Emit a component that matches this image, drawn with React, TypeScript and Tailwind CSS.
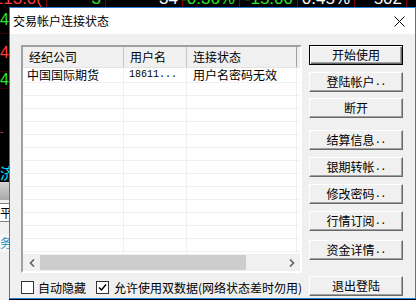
import React from "react";

const tickers = [
  { w: "w-[47px]", text: "4213.0(", color: "text-[#ff3c3c]" },
  { w: "w-[59px]", text: "3", color: "text-[#29e629]" },
  { w: "w-[77px]", text: "34", color: "text-white" },
  { w: "w-[57px]", text: "-0.36%", color: "text-[#29e629]" },
  { w: "w-[58px]", text: "-15.00", color: "text-[#29e629]" },
  { w: "w-[57px]", text: "0.45%", color: "text-white" },
  { w: "w-[52px]", text: "502", color: "text-white" },
];

const buttons = [
  { label: "开始使用", dots: false, mt: "mt-0", primary: true },
  { label: "登陆帐户", dots: true, mt: "mt-[7px]" },
  { label: "断开", dots: false, mt: "mt-[6px]" },
  { label: "结算信息", dots: true, mt: "mt-[12px]" },
  { label: "银期转帐", dots: true, mt: "mt-[7px]" },
  { label: "修改密码", dots: true, mt: "mt-[7px]" },
  { label: "行情订阅", dots: true, mt: "mt-[7px]" },
  { label: "资金详情", dots: true, mt: "mt-[9px]" },
  { label: "退出登陆", dots: false, mt: "mt-[16px]" },
];

function Dots() {
  return <span className="font-['Liberation_Mono',monospace] text-[11px] tracking-[-1px]">..</span>;
}

function WinButton({ label, dots, mt, primary }: { label: string; dots: boolean; mt: string; primary?: boolean }) {
  return (
    <div
      className={`${mt} h-[20px] w-[94px] flex items-center justify-center bg-[#f0f0f0] text-[12px] text-black leading-none ${
        primary
          ? "border border-black shadow-[inset_1px_1px_0_#ffffff,inset_-1px_-1px_0_#696969,inset_-2px_-2px_0_#a0a0a0]"
          : "border border-t-white border-l-white border-r-[#696969] border-b-[#696969] shadow-[inset_-1px_-1px_0_#a0a0a0]"
      }`}
    >
      <span>{label}</span>
      {dots && <Dots />}
    </div>
  );
}

function Row() {
  return (
    <div className="flex shrink-0 h-[13px] border-b border-[#f0f0f0]">
      <div className="w-[101px] border-r border-[#f0f0f0]" />
      <div className="w-[63px] border-r border-[#f0f0f0]" />
      <div className="w-[110px] border-r border-[#f0f0f0]" />
      <div className="flex-1" />
    </div>
  );
}

export default function App() {
  return (
    <div className="relative w-[416px] h-[300px] overflow-hidden bg-black font-['Noto_Sans_CJK_SC','Noto_Sans',sans-serif]">
      {/* market board behind the dialog */}
      <div className="flex h-[7px] overflow-hidden">
        {tickers.map((t, i) => (
          <div
            key={i}
            className={`${t.w} shrink-0 border-r border-[#7a0000] flex justify-end pr-[4px] font-['Liberation_Sans',sans-serif] text-[17px] leading-[16px] -mt-[9px] ${t.color}`}
          >
            {t.text}
          </div>
        ))}
      </div>
      <div className="flex flex-col w-[9px] h-[293px] overflow-hidden font-['Liberation_Sans',sans-serif] text-[16px] leading-none">
        <div className="h-[27px] flex items-center text-[#29e629] border-b border-[#3a0000]">4213</div>
        <div className="h-[38px] flex items-center text-[#ff3c3c] border-b border-[#3a0000]">4213</div>
        <div className="h-[17px] flex items-center text-[#29e629] border-b border-[#3a0000]">4213</div>
        <div className="h-[30px]" />
        <div className="h-[26px] flex items-center text-[#ff3c3c] text-[10px]">-</div>
        <div className="h-[17px]" />
        <div className="h-[20px] flex items-center text-[#00e5ff] font-['Noto_Sans_CJK_SC',sans-serif] text-[15px]">济</div>
        <div className="h-[18px] bg-gradient-to-b from-[#d4d4d4] to-[#a8a8a8]" />
        <div className="h-[3px] bg-[#f0f0f0]" />
        <div className="h-[19px] bg-white border-y border-[#808080] flex items-center text-black font-['Noto_Sans_CJK_SC',sans-serif] text-[12px]">平</div>
        <div className="h-[12px] bg-[#f0f0f0]" />
        <div className="h-[18px] bg-[#f7f7f7] flex items-center text-[#1e90c8] font-['Noto_Sans_CJK_SC',sans-serif] text-[12px]">务</div>
        <div className="flex-1 bg-[#f0f0f0]" />
      </div>

      {/* dialog window */}
      <div className="absolute left-[9px] top-[7px] w-[407px] h-[292px] border border-[#2a7fd4] flex flex-col">
        <div className="h-[26px] shrink-0 bg-white flex items-center justify-between pl-[3px] pr-[10px]">
          <span className="text-[12px] text-black leading-none">交易帐户连接状态</span>
          <svg width="11" height="11" viewBox="0 0 11 11">
            <path d="M0.5 0.5 L10.5 10.5 M10.5 0.5 L0.5 10.5" stroke="#000" strokeWidth="1" />
          </svg>
        </div>

        <div className="flex-1 bg-[#f0f0f0] flex pl-[11px] pt-[11px]">
          <div className="w-[281px] shrink-0 flex flex-col">
            {/* list view */}
            <div className="h-[228px] shrink-0 flex flex-col bg-white border-2 border-t-[#a0a0a0] border-l-[#a0a0a0] border-r-white border-b-white text-[12px] text-black leading-none">
              <div className="h-[21px] shrink-0 flex bg-[#f0f0f0] border-b border-[#e3e3e3]">
                <div className="w-[101px] border-r border-[#c8c8c8] flex items-center pl-[6px]">经纪公司</div>
                <div className="w-[63px] border-r border-[#c8c8c8] flex items-center pl-[6px]">用户名</div>
                <div className="w-[110px] border-r border-[#a0a0a0] flex items-center pl-[6px]">连接状态</div>
                <div className="flex-1" />
              </div>
              <div className="flex-1 flex flex-col overflow-hidden">
                <div className="flex shrink-0 h-[15px] border-b border-[#f0f0f0]">
                  <div className="w-[101px] border-r border-[#f0f0f0] flex items-center pl-[4px]">中国国际期货</div>
                  <div className="w-[63px] border-r border-[#f0f0f0] flex items-center pl-[5px] font-['Liberation_Mono',monospace] text-[10px]">18611...</div>
                  <div className="w-[110px] border-r border-[#f0f0f0] flex items-center pl-[6px]">用户名密码无效</div>
                  <div className="flex-1" />
                </div>
                {Array.from({ length: 14 }).map((_, i) => (
                  <Row key={i} />
                ))}
              </div>
              {/* horizontal scrollbar */}
              <div className="h-[17px] shrink-0 flex bg-[#f0f0f0]">
                <div className="w-[17px] flex items-center justify-center">
                  <svg width="6" height="8" viewBox="0 0 6 8">
                    <path d="M5 0.5 L1.5 4 L5 7.5" stroke="#606060" strokeWidth="1.6" fill="none" />
                  </svg>
                </div>
                <div className="w-[206px] my-[1px] bg-[#cdcdcd]" />
                <div className="flex-1" />
                <div className="w-[17px] flex items-center justify-center">
                  <svg width="6" height="8" viewBox="0 0 6 8">
                    <path d="M1 0.5 L4.5 4 L1 7.5" stroke="#606060" strokeWidth="1.6" fill="none" />
                  </svg>
                </div>
              </div>
            </div>

            {/* options */}
            <div className="mt-[8px] h-[13px] flex items-center text-[12px] text-black leading-none whitespace-nowrap">
              <div className="shrink-0 w-[13px] h-[13px] bg-white border border-[#333333]" />
              <span className="shrink-0 ml-[4px]">自动隐藏</span>
              <div className="shrink-0 ml-[10px] w-[13px] h-[13px] bg-white border border-[#333333] flex items-center justify-center">
                <svg width="9" height="9" viewBox="0 0 9 9">
                  <path d="M1 4.5 L3.5 7 L8 1.5" stroke="#000" strokeWidth="1.5" fill="none" />
                </svg>
              </div>
              <span className="shrink-0 ml-[5px]">允许使用双数据(网络状态差时勿用)</span>
            </div>
          </div>

          {/* buttons */}
          <div className="ml-[7px] flex flex-col">
            {buttons.map((b) => (
              <WinButton key={b.label} {...b} />
            ))}
          </div>
        </div>
      </div>
    </div>
  );
}
